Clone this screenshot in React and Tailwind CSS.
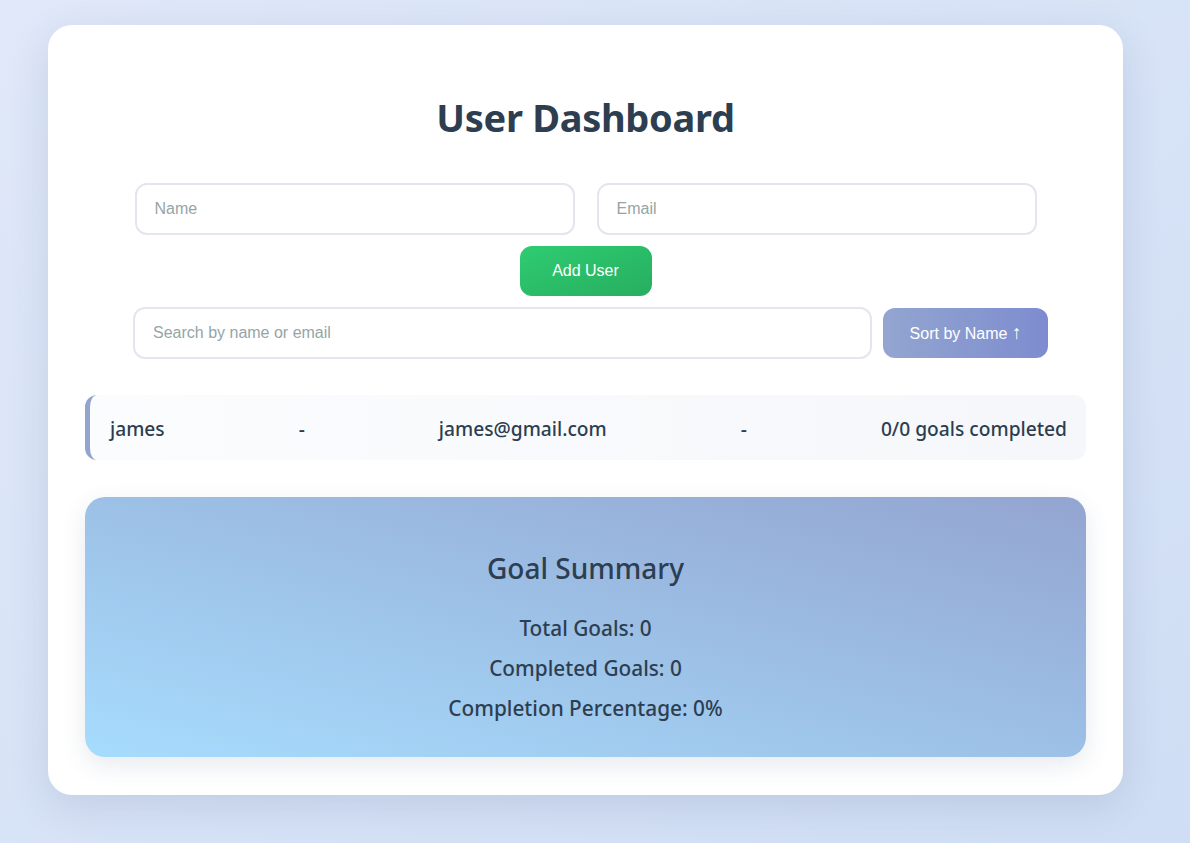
export default function App() {
    const users = [{ name: "james", email: "james@gmail.com", done: 0, total: 0 }];
    const ui = { fontFamily: '"Noto Sans", "Open Sans", sans-serif' };
    const arial = { fontFamily: '"Liberation Sans", Arial, sans-serif' };

    return (
        <div className="min-h-screen bg-gradient-to-br from-[#e0e8f9] to-[#cfdef4] pt-[25px] pb-[48px]" style={ui}>
            <div className="ml-[48px] w-[1075px] rounded-[24px] bg-white px-[37px] pt-[66px] pb-[38px] shadow-[0_12px_40px_rgba(60,80,120,0.14)]">
                <h1 className="text-center text-[38px] font-bold leading-[1.4] text-[#2c3e50] tracking-[-0.3px]">User Dashboard</h1>

                {/* Add user form */}
                <div className="mt-[39px] flex justify-center gap-[22px]" style={arial}>
                    <input
                        placeholder="Name"
                        className="h-[52px] w-[440px] rounded-[12px] border-2 border-[#e3e6ef] px-[18px] text-[16px] text-[#2c3e50] placeholder:text-[#95a5a6] outline-none"
                    />
                    <input
                        placeholder="Email"
                        className="h-[52px] w-[440px] rounded-[12px] border-2 border-[#e3e6ef] px-[18px] text-[16px] text-[#2c3e50] placeholder:text-[#95a5a6] outline-none"
                    />
                </div>
                <div className="mt-[11px] flex justify-center" style={arial}>
                    <button className="h-[50px] w-[132px] rounded-[12px] bg-gradient-to-br from-[#2ecc71] to-[#27ae60] text-[16px] text-white">
                        Add User
                    </button>
                </div>

                {/* Search + sort */}
                <div className="mt-[11px] flex items-center gap-[11px] pl-[48px]" style={arial}>
                    <input
                        placeholder="Search by name or email"
                        className="h-[52px] w-[739px] rounded-[12px] border-2 border-[#e3e6ef] px-[18px] text-[16px] text-[#2c3e50] placeholder:text-[#95a5a6] outline-none"
                    />
                    <button className="h-[50px] w-[165px] rounded-[12px] bg-gradient-to-r from-[#93a5cf] to-[#7e8ccf] text-[16px] text-white">
                        Sort by Name <span className="text-[19px]">↑</span>
                    </button>
                </div>

                {/* User list */}
                <div className="mt-[36px]">
                    {users.map((u) => (
                        <div
                            key={u.email}
                            className="flex h-[65px] items-center justify-between rounded-[12px] border-l-[5px] border-[#93a5cf] bg-gradient-to-r from-[#fbfcfe] to-[#f6f7fa] pl-[20px] pr-[19px] pt-[3px] text-[19.2px] font-medium text-[#2c3e50]"
                        >
                            <span>{u.name}</span>
                            <span>-</span>
                            <span>{u.email}</span>
                            <span>-</span>
                            <span>{u.done}/{u.total} goals completed</span>
                        </div>
                    ))}
                </div>

                {/* Summary */}
                <div className="mt-[37px] flex h-[260px] flex-col items-center rounded-[20px] bg-gradient-to-tr from-[#a6dcfd] to-[#93a5d0] pt-[51px] text-[#2c3e50] shadow-[0_8px_24px_rgba(60,80,120,0.12)]">
                    <h2 className="text-[28px] font-medium leading-[40px]">Goal Summary</h2>
                    <div className="mt-[20px] flex flex-col items-center text-[20.8px] font-medium leading-[40px]">
                        <p>Total Goals: 0</p>
                        <p>Completed Goals: 0</p>
                        <p>Completion Percentage: 0%</p>
                    </div>
                </div>
            </div>
        </div>
    );
}
